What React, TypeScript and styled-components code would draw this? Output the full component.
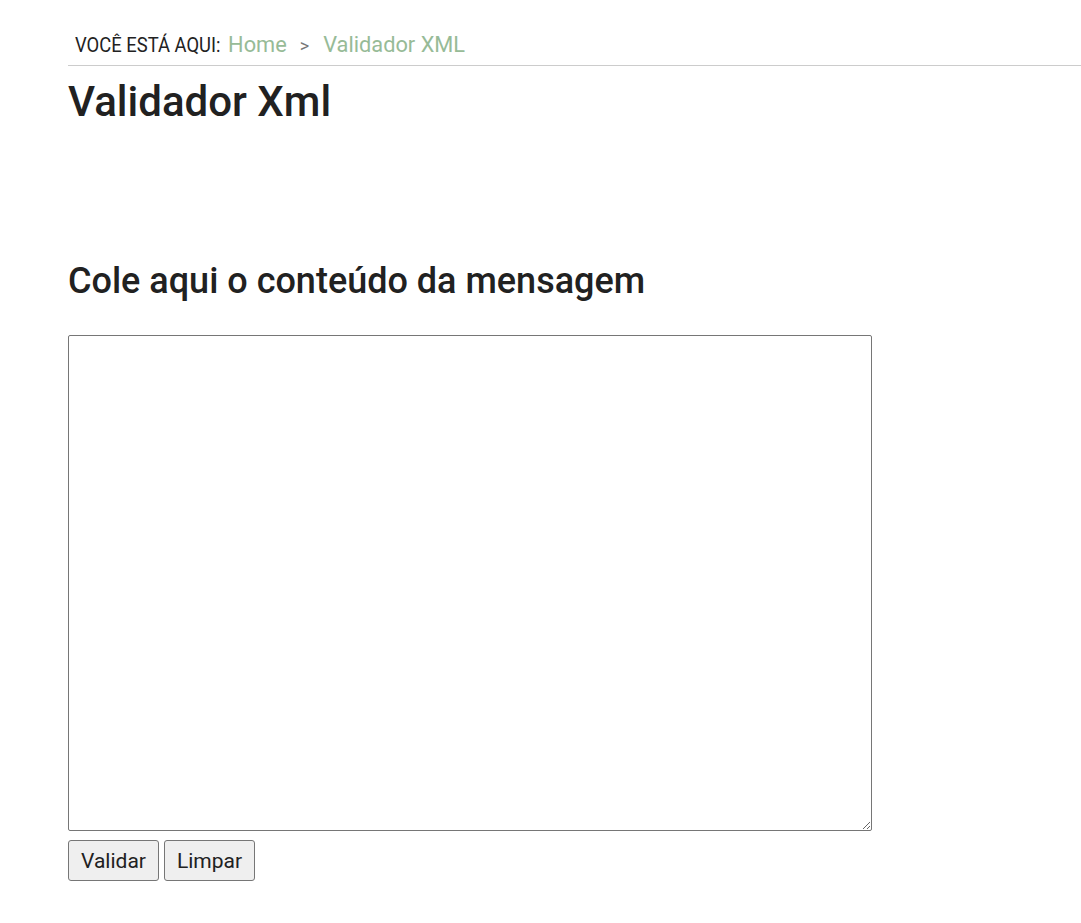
import React from "react";
import styled, { createGlobalStyle } from "styled-components";

const Global = createGlobalStyle`
  html, body { margin: 0; padding: 0; background: #fff; }
  body { font-family: Roboto, "Noto Sans", Arial, sans-serif; color: #212121; }
`;

const Page = styled.div`
  padding-left: 68px;
  padding-top: 30px;
`;

const Breadcrumb = styled.nav`
  display: flex;
  align-items: baseline;
  padding: 0 0 0 7px;
  height: 36px;
  box-sizing: border-box;
  border-bottom: 1px solid #cccccc;
  font-size: 21.8px;
  line-height: 30px;
`;

const Label = styled.span`
  font-size: 20px;
  color: #222;
  display: inline-block;
  transform: scaleX(0.92);
  transform-origin: left center;
  margin-right: -12px;
`;

const Crumb = styled.a`
  color: #97bb97;
  text-decoration: none;
  margin-left: 7px;
`;

const Sep = styled.span`
  color: #777;
  font-size: 18px;
  margin: 0 7px 0 13px;
`;

const Title = styled.h1`
  margin: 12px 0 0;
  font-size: 42px;
  font-weight: 500;
  line-height: 48px;
  color: #212121;
`;

const Subtitle = styled.h2`
  margin: 133px 0 0;
  font-size: 36px;
  font-weight: 500;
  line-height: 44px;
  color: #212121;
`;

const Form = styled.form`
  margin-top: 32px;
  display: flex;
  flex-direction: column;
  align-items: flex-start;
`;

const Area = styled.textarea`
  width: 804px;
  height: 496px;
  box-sizing: border-box;
  border: 1px solid #767676;
  border-radius: 2px;
  resize: both;
  margin: 0;
  padding: 2px;
  font-family: Roboto, sans-serif;
`;

const Buttons = styled.div`
  display: flex;
  gap: 5px;
  margin-top: 9px;
`;

const Button = styled.button`
  height: 41px;
  padding: 0 12px;
  font-family: Roboto, sans-serif;
  font-size: 21px;
  color: #212121;
  background: #efefef;
  border: 1px solid #767676;
  border-radius: 3px;
`;

export default function App() {
  return (
    <Page>
      <Global />
      <Breadcrumb>
        <Label>VOCÊ ESTÁ AQUI:</Label>
        <Crumb href="#">Home</Crumb>
        <Sep>&gt;</Sep>
        <Crumb href="#">Validador XML</Crumb>
      </Breadcrumb>
      <Title>Validador Xml</Title>
      <Subtitle>Cole aqui o conteúdo da mensagem</Subtitle>
      <Form onSubmit={(e) => e.preventDefault()}>
        <Area />
        <Buttons>
          <Button type="submit">Validar</Button>
          <Button type="button">Limpar</Button>
        </Buttons>
      </Form>
    </Page>
  );
}
